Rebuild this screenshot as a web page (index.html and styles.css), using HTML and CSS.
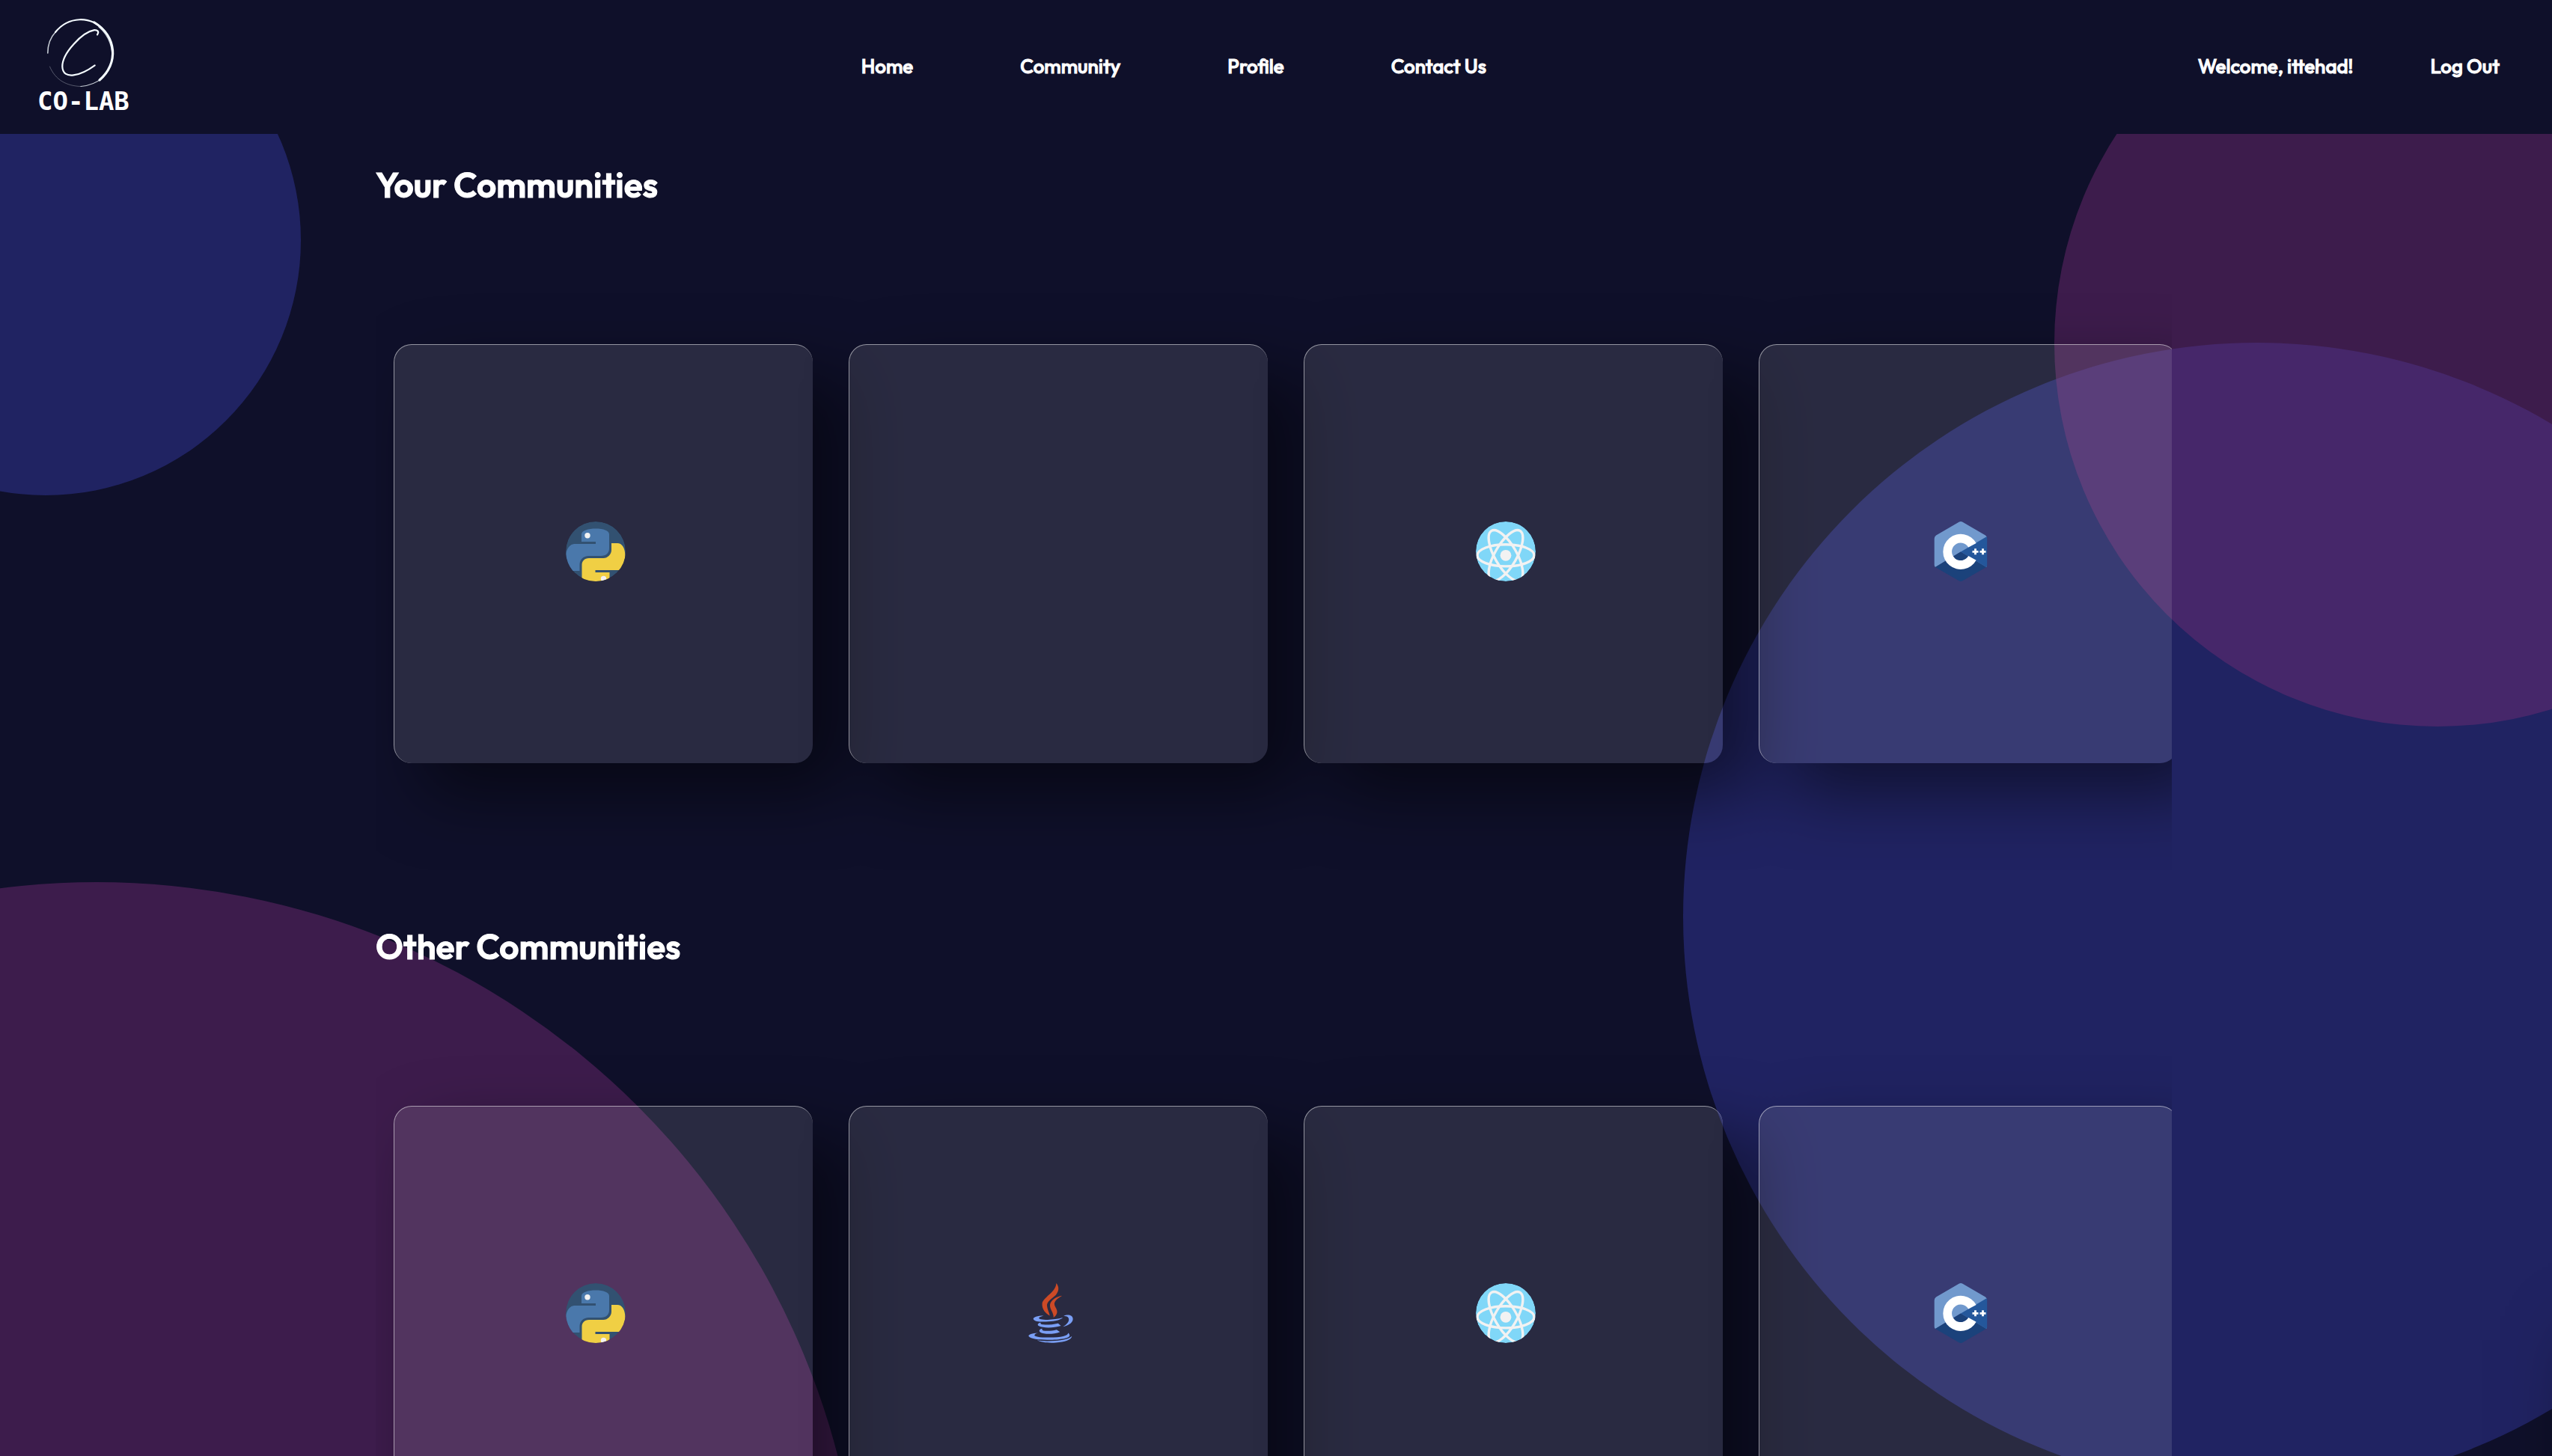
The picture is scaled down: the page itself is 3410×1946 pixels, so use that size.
FILE: index.html
```html
<!DOCTYPE html>
<html lang="en">
<head>
<meta charset="utf-8">
<meta name="viewport" content="width=device-width, initial-scale=1">
<title>CO-LAB</title>
<link rel="stylesheet" href="styles.css">
</head>
<body>
<svg class="symbols" aria-hidden="true">
  <symbol id="python" viewBox="0 0 80 80">
    <clipPath id="python-disc"><circle cx="40" cy="40" r="40"/></clipPath>
    <g clip-path="url(#python-disc)">
      <circle cx="40" cy="40" r="40" fill="#325171"/>
      <path fill="#4a78ab" d="M21 27H40V30H13C6 30 2 34 0 44C1 55 4 62 8 66H18.500V58C18.500 51 23 46 31 46H47C54 46 58 42 58 36V17C58 12 50 9.500 40 9.500S21 12 21 17Z"/>
      <path fill="#f0cf44" d="M21.500 80V58C21.500 53 25 49 31 49H50C56 49 61 44 61 38V29H69C75 29 79 35 79.500 45C79 53 76 61 72 65H39.500V68H58.500V80Z"/>
      <circle cx="29" cy="18.700" r="3.700" fill="#f2f2f2"/>
      <circle cx="50.500" cy="76.500" r="3.700" fill="#f2f2f2"/>
    </g>
  </symbol>
  <symbol id="react" viewBox="0 0 80 80">
    <clipPath id="react-disc"><circle cx="40" cy="40" r="40"/></clipPath>
    <g clip-path="url(#react-disc)">
      <circle cx="40" cy="40" r="40" fill="#80d7f8"/>
      <circle cx="40" cy="45.300" r="7.400" fill="#f2f2f2"/>
      <g fill="none" stroke="#f2f2f2" stroke-width="3.400">
        <ellipse cx="40" cy="45.300" rx="38" ry="14.600"/>
        <ellipse cx="40" cy="45.300" rx="38" ry="14.600" transform="rotate(60 40 45.300)"/>
        <ellipse cx="40" cy="45.300" rx="38" ry="14.600" transform="rotate(120 40 45.300)"/>
      </g>
    </g>
  </symbol>
  <symbol id="cpp" viewBox="0 0 80 80">
    <path fill="#7199cd" d="M37.500 .800Q40 -.600 42.500 .800L73 18.500Q75 20 75 22V58Q75 60 74 61L40 40.500L6 61Q4.700 60 4.700 58V23Q4.700 20 7 18.500Z"/>
    <path fill="#1b427b" d="M40 40.500L74 61L42.500 79.200Q40 80.600 37.500 79.200L6 61Z"/>
    <path fill="#24579b" d="M40 40.500L74.500 20.200Q75.200 21 75.200 23V58Q75.200 60 74 61Z"/>
    <path fill="#fff" d="M60.600 29A23.600 23.600 0 1 0 60.600 51.800L50.200 46A11.800 11.800 0 1 1 50.200 34.600Z"/>
    <path stroke="#fff" stroke-width="2.800" d="M55.500 40.300H63.500M59.500 36.300V44.300M65.500 40.300H73.500M69.500 36.300V44.300"/>
  </symbol>
  <symbol id="java" viewBox="0 0 80 81">
    <g fill="#cc4a26">
      <path d="M47.500 0C51.500 5 51.500 10 47 16C42 21 34 25 35 31C35.500 36 38 40 38.700 44C33 41 28 35 28.400 28C29 19 47 13 47.500 0Z"/>
      <path d="M55.400 17C50 20 45 24 45 28C45 32 49.500 35 48.500 40C48 43 46 45 43.700 46.700C44.500 40 38.500 36 39 29C40 23 48 18 55.400 17Z"/>
    </g>
    <g fill="#7a9ff5">
      <path d="M30.400 44C22 44 16 46 16.500 48.500C18 52.500 28 52.500 37 52C46 51.500 53 50 56.400 46.700C50 48.700 42 49.500 36 49.500C28 49.500 24 48.500 24 47C24 46 27 45 30.400 44Z"/>
      <path d="M57.500 44.500C62 42 70 42.500 70 48.500C70 54 62 58 56.500 59C61 56 64.500 53 64.500 49C64.500 46 62 44.500 57.500 44.500Z"/>
      <path d="M26.500 53.300C22 54 21.500 56.500 24 58C30 61 44 60.800 53.800 57.700L50 54.300C42 56.300 32 56.700 28 55.800C26 55.200 26 54.200 26.500 53.300Z"/>
      <path d="M28.500 61.500C24.500 62 23.500 65 26 66.500C31 69.500 44 69.500 52.500 66L48 63C42 64.700 34 65 30 64.200C28 63.500 28 62.500 28.500 61.500Z"/>
      <path d="M23 67.300C15 67.500 9 69.500 10.200 72C13 76 25 76.800 37 76.700C52 76.500 67 74.500 65.500 70C65 68.500 64.500 67.800 63.500 67.300C64 71 54 73.500 38 73.500C24 73.500 18 72 18 70.500C18 69 20 68 23 67.300Z"/>
      <path d="M21.400 77.300C28 78.700 38 78.500 46 78C56 77.200 65 75.500 68.700 71.700C68 77 59 79.500 47 80.500C37 81.200 27 80.200 21.400 77.300Z"/>
    </g>
  </symbol>
</svg>

<svg class="backdrop" viewBox="0 0 3410 1946" preserveAspectRatio="xMidYMid slice" aria-hidden="true">
  <g fill="#202362">
    <circle cx="61" cy="321" r="341"/>
    <circle cx="3016" cy="1225" r="767"/>
  </g>
  <g fill="#762d75" fill-opacity=".45">
    <circle cx="3257" cy="459" r="512"/>
    <circle cx="129" cy="2202" r="1023"/>
  </g>
</svg>

<div class="page">
  <header class="header">
    <a class="brand" href="#">
      <svg class="brand-mark" viewBox="0 0 96 96" fill="none" stroke="#f4fbff" stroke-linecap="round" aria-hidden="true">
        <path stroke-width="1.600" stroke-opacity=".8" d="M3.800 48C3.800 38 7.500 27 14 20"/>
        <path stroke-width="2.200" d="M14 20C31 -1 61 -3 79 18"/>
        <path stroke-width="3.200" d="M66 7C96 25 99 62 73 84"/>
        <path stroke-width="1.200" stroke-opacity=".8" d="M72 13C100 36 97 88 48 92.500"/>
        <path stroke-width="1" stroke-opacity=".3" d="M6.500 66C14 84 29 92 48 92.500"/>
        <path stroke-width="2.200" d="M70 23.300C73 19 70 17 66 17.200C50 20 23 48 23.300 66C24 85 48 78 66.700 64.300"/>
      </svg>
      <span class="brand-name">CO-LAB</span>
    </a>
    <nav class="nav">
      <a href="#">Home</a>
      <a href="#">Community</a>
      <a href="#">Profile</a>
      <a href="#">Contact Us</a>
    </nav>
    <div class="account">
      <span>Welcome, ittehad!</span>
      <a href="#">Log Out</a>
    </div>
  </header>

  <main class="main">
    <section class="communities">
      <h2>Your Communities</h2>
      <ul class="carousel">
        <li><a class="card" href="#" aria-label="Python"><svg><use href="#python"/></svg></a></li>
        <li><a class="card" href="#" aria-label="Community"></a></li>
        <li><a class="card" href="#" aria-label="React"><svg><use href="#react"/></svg></a></li>
        <li><a class="card" href="#" aria-label="C++"><svg><use href="#cpp"/></svg></a></li>
      </ul>
    </section>
    <section class="communities">
      <h2>Other Communities</h2>
      <ul class="carousel">
        <li><a class="card" href="#" aria-label="Python"><svg><use href="#python"/></svg></a></li>
        <li><a class="card" href="#" aria-label="Java"><svg><use href="#java"/></svg></a></li>
        <li><a class="card" href="#" aria-label="React"><svg><use href="#react"/></svg></a></li>
        <li><a class="card" href="#" aria-label="C++"><svg><use href="#cpp"/></svg></a></li>
      </ul>
    </section>
  </main>
</div>
</body>
</html>
```
FILE: styles.css
```css
* {
  box-sizing: border-box;
}

body {
  margin: 0;
  background: #0f102a;
  color: #fff;
  font-family: Outfit, Lato, sans-serif;
}

a {
  color: inherit;
  text-decoration: none;
}

.symbols {
  position: absolute;
  width: 0;
  height: 0;
}

.backdrop {
  position: fixed;
  inset: 0;
  z-index: -1;
  width: 100%;
  height: 100%;
}

.page {
  display: flex;
  flex-direction: column;
  height: 100vh;
  overflow: hidden;
}

.page::after {
  content: "";
  position: fixed;
  top: 90%;
  left: 100%;
  width: 400px;
  height: 600px;
  box-shadow: 40px 40px 90px rgba(0, 0, 0, .5);
}

.header {
  display: flex;
  flex: none;
  align-items: center;
  justify-content: space-between;
  height: 179px;
  padding: 0 70px 2px 50px;
  background: #0f102a;
  font-size: 26px;
  line-height: 32px;
}

.brand {
  display: flex;
  flex-direction: column;
  width: 150px;
  padding-bottom: 4px;
}

.brand-mark {
  width: 96px;
  height: 96px;
  margin-left: 10px;
}

.brand-name {
  font-family: "DejaVu Sans Mono", monospace;
  font-size: 34px;
  font-weight: 700;
}

.nav,
.account {
  display: flex;
  font-weight: 500;
  -webkit-text-stroke: 1px #fff;
}

.nav {
  gap: 143px;
}

.account {
  gap: 103px;
}

.main {
  flex: 1;
  min-height: 0;
  padding: 0 508px 0 502px;
  overflow-y: auto;
  scrollbar-width: none;
}

.communities {
  padding: 38px 0 34px;
}

h2 {
  margin: 0 0 40px;
  font-size: 46px;
  font-weight: 600;
  line-height: 60px;
  -webkit-text-stroke: 1px #fff;
}

.carousel {
  display: flex;
  gap: 48px;
  margin: 0;
  padding: 143px 24px;
  overflow: hidden;
  list-style: none;
}

.card {
  display: flex;
  align-items: center;
  justify-content: center;
  width: 560px;
  height: 560px;
  padding: 0 22px 8px 0;
  border-top: 1px solid rgba(255, 255, 255, .5);
  border-left: 1px solid rgba(255, 255, 255, .5);
  border-radius: 24px;
  background: rgba(255, 255, 255, .11);
  box-shadow: 40px 40px 90px rgba(0, 0, 0, .5);
}

.card svg {
  width: 80px;
  height: 80px;
}
```
